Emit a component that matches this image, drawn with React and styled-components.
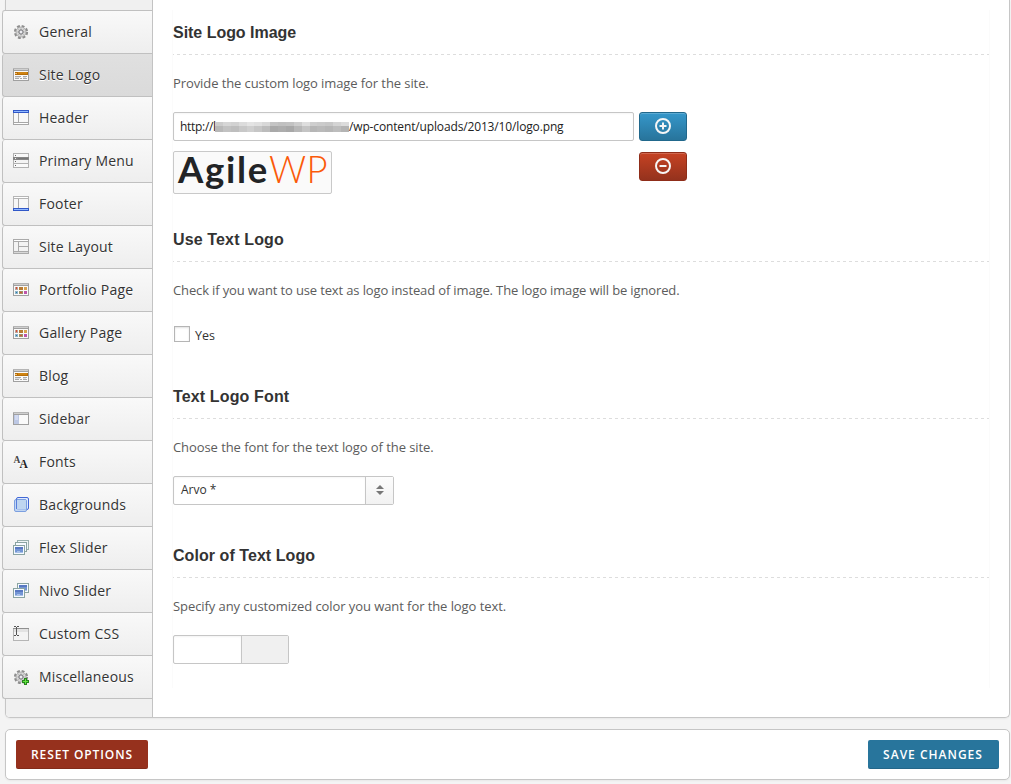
import React from "react";
import styled, { createGlobalStyle } from "styled-components";

const Global = createGlobalStyle`
  *, *::before, *::after { box-sizing: border-box; }
  html, body { margin: 0; padding: 0; background: #f4f4f4; overflow: hidden; }
  body { font-family: "Open Sans", "Noto Sans", sans-serif; font-size: 13px; color: #555; }
  h3, p { margin: 0; }
  svg { display: block; }
`;

const Page = styled.div`
  height: 784px;
  padding: 0 1px 4px 5px;
  display: flex;
  flex-direction: column;
  gap: 11px;
`;

const Panel = styled.main`
  display: flex;
  height: 718px;
  width: 1005px;
  background: #fff;
  border: 1px solid #c6c6c6;
  border-top: 0;
  border-radius: 0 0 5px 5px;
  box-shadow: 0 1px 2px rgba(0, 0, 0, 0.05);
`;

const Sidebar = styled.nav`
  width: 147px;
  padding-top: 10px;
  background: #f0f0f0;
  border-right: 1px solid #c3c3c3;
  border-bottom-left-radius: 4px;
`;

const NavList = styled.ul`
  list-style: none;
  margin: 0 0 0 -4px;
  padding: 0;
  border-top: 1px solid #c0c0c0;
  border-radius: 3px 0 0 0;
`;

const NavItem = styled.li`
  display: flex;
  align-items: center;
  gap: 10px;
  height: 43px;
  padding: 0 0 1px 10px;
  border: solid #c0c0c0;
  border-width: 0 0 1px 1px;
  border-radius: 3px 0 0 3px;
  background: ${(p) => (p.$active ? "linear-gradient(#e0e0e0, #dadada)" : "linear-gradient(#f9f9f9, #eeeeee)")};
  color: #333;
  font-size: 14px;
  letter-spacing: 0.2px;
  white-space: nowrap;
  text-shadow: 0 1px 0 #fff;
`;

const Content = styled.div`
  flex: 1;
  padding: 10px 19px 29px 19px;
`;

const Sections = styled.div`
  height: 678px;
  border: solid #fbfbfb;
  border-width: 0 1px;
`;

const Section = styled.section`
  height: ${(p) => p.$height}px;
`;

const Heading = styled.h3`
  height: 45px;
  padding-top: 1px;
  font: bold 16px/44px "Liberation Sans", Arial, sans-serif;
  letter-spacing: ${(p) => p.$tracking ?? 0.14}px;
  color: #333;
  background: repeating-linear-gradient(90deg, #ddd 0 1px, transparent 1px 4px, #ddd 4px 6px) 0 100% / 100% 1px no-repeat;
`;

const Description = styled.p`
  height: 57px;
  line-height: 57px;
  letter-spacing: ${(p) => p.$tracking ?? -0.075}px;
  color: #5c5c5c;
`;

const UploadGrid = styled.div`
  display: grid;
  grid-template-columns: 461px 48px;
  column-gap: 5px;
  row-gap: 10px;
  align-items: start;
`;

const TextField = styled.div`
  display: flex;
  align-items: center;
  height: 29px;
  padding: 0 6px 1px;
  border: 1px solid #c6c6c6;
  border-radius: 2px;
  font-size: 12px;
  letter-spacing: -0.145px;
  color: #222;
  white-space: nowrap;
  box-shadow: inset 0 1px 2px rgba(0, 0, 0, 0.04);
`;

const UrlScheme = styled.span`
  width: 35px;
  letter-spacing: -0.3px;
`;

const Mosaic = styled.span`
  display: grid;
  grid-template-columns: repeat(17, 1fr);
  grid-template-rows: 4px 6px;
  width: 134px;
  margin-top: 2px;
`;

const Tile = styled.i`
  background: ${(p) => p.$tone};
`;

const IconButton = styled.button`
  display: flex;
  align-items: center;
  justify-content: center;
  width: 48px;
  height: 29px;
  padding: 0 0 1px;
  border: 1px solid ${(p) => (p.$danger ? "#8f2d19" : "#21688c")};
  border-radius: 3px;
  background: ${(p) => (p.$danger ? "linear-gradient(#c64223, #94321d)" : "linear-gradient(#3597ca, #28749b)")};
  box-shadow: inset 0 1px 0 rgba(255, 255, 255, 0.2);
`;

const LowerButton = styled.div`
  padding-top: 1px;
`;

const LogoPreview = styled.div`
  width: 159px;
  height: 43px;
  padding-left: 4px;
  border: 1px solid #c9c9c9;
  border-radius: 2px;
  background: #fafafa;
  font: 700 36.5px/34px Lato, sans-serif;
  letter-spacing: 1.7px;
  color: #222426;
  white-space: nowrap;
`;

const LogoAccent = styled.span`
  font-weight: 300;
  letter-spacing: 0.3px;
  color: #fb5a0a;
`;

const CheckLabel = styled.label`
  display: flex;
  align-items: center;
  gap: 5px;
  height: 31px;
  padding-left: 1px;
  font-size: 12.5px;
  color: #333;
`;

const CheckText = styled.span`
  padding-top: 2px;
`;

const CheckBox = styled.span`
  width: 16px;
  height: 16px;
  margin-bottom: 1px;
  border: 1px solid #b5b5b5;
  background: #fff;
  box-shadow: inset 0 1px 2px rgba(0, 0, 0, 0.12);
`;

const Select = styled.div`
  display: flex;
  width: 221px;
  height: 29px;
  border: 1px solid #c6c6c6;
  border-radius: 2px;
  font-size: 12px;
  color: #333;
`;

const SelectValue = styled.span`
  flex: 1;
  padding-left: 7px;
  line-height: 25px;
  box-shadow: inset 0 1px 2px rgba(0, 0, 0, 0.04);
`;

const SelectHandle = styled.span`
  display: flex;
  align-items: center;
  justify-content: center;
  width: 28px;
  padding: 0 0 1px;
  border-left: 1px solid #c6c6c6;
  background: linear-gradient(#fcfcfc, #f2f2f2);
`;

const ColorField = styled.div`
  display: flex;
  width: 116px;
  height: 29px;
  border: 1px solid #c6c6c6;
  border-radius: 2px;
`;

const ColorValue = styled.span`
  width: 67px;
  box-shadow: inset 0 1px 2px rgba(0, 0, 0, 0.05);
`;

const Swatch = styled.span`
  flex: 1;
  border-left: 1px solid #c6c6c6;
  background: #f0f0f0;
`;

const Footer = styled.footer`
  display: flex;
  justify-content: space-between;
  align-items: center;
  width: 1005px;
  height: 51px;
  padding: 0 10px;
  background: #fff;
  border: 1px solid #c6c6c6;
  border-radius: 5px;
  box-shadow: 0 1px 2px rgba(0, 0, 0, 0.05);
`;

const ActionButton = styled.button`
  width: ${(p) => p.$width}px;
  height: 29px;
  padding: 0 ${(p) => (p.$danger ? 0 : 1)}px 0 0;
  border: 0;
  border-radius: 2px;
  background: ${(p) => (p.$danger ? "#96311d" : "#28759c")};
  box-shadow: inset 0 -1px 0 rgba(0, 0, 0, 0.12);
  font: 600 12px/29px "Open Sans", sans-serif;
  letter-spacing: ${(p) => (p.$danger ? 0.9 : 1)}px;
  text-transform: uppercase;
  white-space: nowrap;
  color: #fff;
`;

const Svg = ({ children }) => (
  <svg width="16" height="16" viewBox="0 0 16 16" shapeRendering="crispEdges">{children}</svg>
);

const Gear = () => (
  <g shapeRendering="auto">
    <circle cx="8" cy="8" r="5.9" fill="none" stroke="#8d8d8d" strokeWidth="2.4" strokeDasharray="2.8 1.83" />
    <circle cx="8" cy="8" r="5" fill="#dadada" stroke="#a0a0a0" strokeWidth="0.8" />
    <path d="M8 3.5v3M8 9.5v3M3.5 8h3M9.5 8h3M4.8 4.8l2 2M9.2 9.2l2 2M11.2 4.8l-2 2M6.8 9.2l-2 2" stroke="#b6b6b6" strokeWidth="0.8" />
    <circle cx="8" cy="8" r="2.2" fill="#c4c4d0" stroke="#7d7d7d" strokeWidth="1" />
    <circle cx="8" cy="8" r="0.9" fill="#fff" />
  </g>
);

const Frame = ({ y = 1, h = 13 }) => (
  <>
    <rect x="0" y={y} width="16" height={h} fill="#a0a0a0" />
    <rect x="0" y={y} width="16" height="1" fill="#b5b5b5" />
    <rect x="1" y={y + 1} width="14" height="1" fill="#cfcfcf" />
    <rect x="1" y={y + 3} width="14" height={h - 4} fill="#fafafa" />
  </>
);

const News = () => (
  <>
    <Frame />
    <rect x="2" y="5" width="13" height="3" fill="#b66d07" />
    <rect x="5" y="5" width="9" height="2" fill="#cf8412" />
    <rect x="2" y="6" width="2" height="1" fill="#e9bd78" />
    <path d="M2 9.5h6M10 9.5h4M2 11.5h4M7 11.5h2M10 11.5h4" stroke="#a9a9a9" />
    <path d="M2 10.5h5M10 10.5h3" stroke="#dedede" />
  </>
);

const Grid = () => (
  <>
    <Frame />
    <rect x="2" y="5" width="3" height="3" fill="#b9a49b" />
    <rect x="3" y="5" width="1" height="2" fill="#d94b35" />
    <rect x="6" y="5" width="4" height="3" fill="#b67b35" />
    <rect x="11" y="5" width="3" height="3" fill="#d9a150" />
    <rect x="2" y="9" width="3" height="3" fill="#8fb3c4" />
    <rect x="3" y="10" width="1" height="1" fill="#247ab5" />
    <rect x="6" y="9" width="4" height="3" fill="#9d9164" />
    <rect x="7" y="10" width="2" height="1" fill="#cf5339" />
    <rect x="11" y="9" width="3" height="3" fill="#bd55aa" />
  </>
);

const Photo = ({ x, y }) => (
  <>
    <rect x={x} y={y} width="12" height="10" fill="#8ba4a2" />
    <rect x={x + 1} y={y + 1} width="10" height="8" fill="#f5faff" />
    <rect x={x + 2} y={y + 2} width="8" height="6" fill="#7395d4" />
    <rect x={x + 2} y={y + 2} width="8" height="2" fill="#5878c2" />
    <path d={`M${x + 2} ${y + 7.5}h8M${x + 4} ${y + 6.5}h3`} stroke="#a7c0e7" />
  </>
);

const icons = {
  gear: <Gear />,
  news: <News />,
  header: (
    <>
      <rect x="0" y="0" width="16" height="15" fill="#a7a7a7" />
      <rect x="1" y="3" width="14" height="9" fill="#f8f8f8" />
      <rect x="1" y="13" width="14" height="1" fill="#fff" />
      <path d="M5.5 3v9" stroke="#aaa" />
      <rect width="16" height="3" fill="#3158c8" />
      <rect x="1" y="1" width="14" height="1" fill="#92baff" />
    </>
  ),
  menu: (
    <>
      <rect width="16" height="15" fill="#b2b2b2" />
      <rect x="1" y="1" width="14" height="3" fill="#f8f8f8" />
      <rect y="4" width="16" height="3" fill="#858585" />
      <rect x="5" y="5" width="10" height="1" fill="#777" />
      <rect x="1" y="7" width="14" height="3" fill="#f4f4f4" />
      <rect x="1" y="11" width="14" height="3" fill="#fafafa" />
      <path d="M2 2.5h1M2 8.5h1M2 12.5h1" stroke="#666" />
      <path d="M2 5.5h1" stroke="#eee" />
    </>
  ),
  footer: (
    <>
      <rect width="16" height="15" fill="#b5b5b5" />
      <rect x="1" y="1" width="14" height="1" fill="#fff" />
      <rect x="1" y="3" width="14" height="9" fill="#f7f7f7" />
      <path d="M5.5 3v9" stroke="#aaa" />
      <rect y="12" width="16" height="3" fill="#3158c8" />
      <rect x="1" y="13" width="14" height="1" fill="#92baff" />
    </>
  ),
  layout: (
    <>
      <rect width="16" height="15" fill="#aaa" />
      <rect x="1" y="1" width="14" height="1" fill="#fff" />
      <rect x="1" y="3" width="14" height="9" fill="#f3f3f3" />
      <rect x="1" y="13" width="14" height="1" fill="#d8d8d8" />
      <path d="M5.5 3v9M6 7.5h9" stroke="#aaa" />
    </>
  ),
  grid: <Grid />,
  sidebar: (
    <>
      <Frame />
      <rect x="1" y="4" width="5" height="9" fill="#bdc8e4" />
      <rect x="2" y="4" width="3" height="5" fill="#d2daf1" />
    </>
  ),
  fonts: (
    <>
      <text x="0.5" y="8.5" fontFamily="Liberation Serif, serif" fontSize="9.5" fontWeight="bold" fill="#444">A</text>
      <text x="6.5" y="13.5" fontFamily="Liberation Serif, serif" fontSize="11.5" fontWeight="bold" fill="#222">A</text>
    </>
  ),
  backgrounds: (
    <g shapeRendering="auto">
      <rect x="3.5" y="0.5" width="12" height="12" rx="1.5" fill="#dfeaff" stroke="#4168d6" />
      <rect x="1.5" y="2.5" width="12" height="12" rx="1.5" fill="#b9d0f1" fillOpacity=".85" stroke="#7b9fe0" />
      <rect x="4" y="3" width="9" height="9" fill="#bed5f0" />
      <path d="M3.5 12V2" stroke="#587edc" />
    </g>
  ),
  flex: (
    <>
      <path d="M4.5 5V.5h11v9H13" fill="#eef5f5" stroke="#99b0ae" />
      <path d="M2.5 6V2.5h11v9H11" fill="#f5faff" stroke="#8ba4a2" />
      <Photo x={0} y={5} />
    </>
  ),
  nivo: (
    <>
      <Photo x={4} y={0} />
      <Photo x={0} y={5} />
    </>
  ),
  css: (
    <>
      <rect x="0" y="2" width="16" height="13" fill="#b5b5b5" />
      <rect x="1" y="3" width="14" height="11" fill="#f3f3f3" />
      <rect x="0" y="2" width="16" height="1" fill="#909090" />
      <rect x="1" y="3" width="14" height="3" fill="#e2e2e2" />
      <path d="M3.5 1v8M1 .5h2M4 .5h2M1 9.5h2M4 9.5h2" stroke="#555" />
    </>
  ),
  misc: (
    <>
      <Gear />
      <path d="M11 9h3v2h2v3h-2v2h-3v-2H9v-3h2z" fill="#27851d" />
      <path d="M12.5 10v5M10 12.5h5" stroke="#62e43f" />
    </>
  ),
};

const items = [
  ["General", "gear"],
  ["Site Logo", "news"],
  ["Header", "header"],
  ["Primary Menu", "menu"],
  ["Footer", "footer"],
  ["Site Layout", "layout"],
  ["Portfolio Page", "grid"],
  ["Gallery Page", "grid"],
  ["Blog", "news"],
  ["Sidebar", "sidebar"],
  ["Fonts", "fonts"],
  ["Backgrounds", "backgrounds"],
  ["Flex Slider", "flex"],
  ["Nivo Slider", "nivo"],
  ["Custom CSS", "css"],
  ["Miscellaneous", "misc"],
];

const tones = [
  "#ccc", "#d6d6d6", "#d2d2d2", "#dcdcdc", "#e4e4e4", "#e0e0e0", "#d8d8d8", "#c4c4c4", "#c0c0c0", "#c2c2c2", "#cdcdcd", "#dedede", "#cecece", "#cbcbcb", "#c8c8c8", "#d4d4d4", "#dcdcdc",
  "#b8b8b8", "#c2c2c2", "#bebebe", "#c8c8c8", "#cfcfcf", "#c6c6c6", "#bcbcbc", "#a9a9a9", "#adadad", "#a8a8a8", "#b7b7b7", "#c4c4c4", "#b6b6b6", "#bababa", "#b6b6b6", "#bdbdbd", "#b4b4b4",
];

const CircleIcon = ({ plus }) => (
  <svg width="16" height="16" viewBox="0 0 16 16" fill="none" stroke="#f6f6f6" strokeWidth="2">
    <circle cx="8" cy="8" r="7" />
    <path d={plus ? "M4.5 8h7M8 4.5v7" : "M4.5 8h7"} />
  </svg>
);

export default function App() {
  return (
    <Page>
      <Global />
      <Panel>
        <Sidebar>
          <NavList>
            {items.map(([label, icon]) => (
              <NavItem key={label} $active={label === "Site Logo"}>
                <Svg>{icons[icon]}</Svg>
                {label}
              </NavItem>
            ))}
          </NavList>
        </Sidebar>
        <Content>
          <Sections>
            <Section $height={207}>
              <Heading $tracking={-0.03}>Site Logo Image</Heading>
              <Description $tracking={-0.09}>Provide the custom logo image for the site.</Description>
              <UploadGrid>
                <TextField>
                  <UrlScheme>http://l</UrlScheme>
                  <Mosaic>{tones.map((tone, i) => <Tile key={i} $tone={tone} />)}</Mosaic>
                  <span>/wp-content/uploads/2013/10/logo.png</span>
                </TextField>
                <IconButton aria-label="Add image"><CircleIcon plus /></IconButton>
                <LogoPreview>Agile<LogoAccent>WP</LogoAccent></LogoPreview>
                <LowerButton>
                  <IconButton $danger aria-label="Remove image"><CircleIcon /></IconButton>
                </LowerButton>
              </UploadGrid>
            </Section>
            <Section $height={157}>
              <Heading>Use Text Logo</Heading>
              <Description $tracking={-0.135}>Check if you want to use text as logo instead of image. The logo image will be ignored.</Description>
              <CheckLabel><CheckBox /><CheckText>Yes</CheckText></CheckLabel>
            </Section>
            <Section $height={159}>
              <Heading>Text Logo Font</Heading>
              <Description>Choose the font for the text logo of the site.</Description>
              <Select>
                <SelectValue>Arvo *</SelectValue>
                <SelectHandle>
                  <svg width="8" height="10" viewBox="0 0 8 10" fill="#777"><path d="M0 4l4-4 4 4zM0 6h8l-4 4z" /></svg>
                </SelectHandle>
              </Select>
            </Section>
            <Section $height={155}>
              <Heading $tracking={0.06}>Color of Text Logo</Heading>
              <Description>Specify any customized color you want for the logo text.</Description>
              <ColorField><ColorValue /><Swatch /></ColorField>
            </Section>
          </Sections>
        </Content>
      </Panel>
      <Footer>
        <ActionButton $danger $width={132}>Reset Options</ActionButton>
        <ActionButton $width={131}>Save Changes</ActionButton>
      </Footer>
    </Page>
  );
}
